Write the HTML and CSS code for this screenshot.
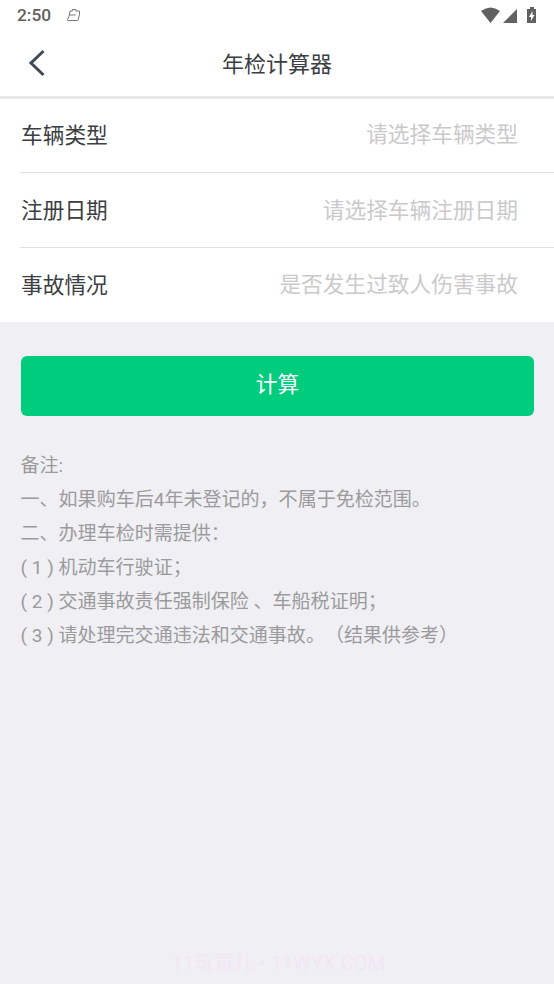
FILE: index.html
```html
<!DOCTYPE html>
<html lang="zh-CN">
<head>
<meta charset="utf-8">
<title>年检计算器</title>
<link rel="stylesheet" href="styles.css">
</head>
<body>
<div class="status">
  <span class="time">2:50</span>
  <svg class="bag" width="16" height="16" viewBox="0 0 16 16" fill="none" stroke="#777"><path d="M4 4h2.300V2.500h3.500V4H13.500v3l-1.300 5.500q-.3 1-1.200 1H1.800q-.9 0-.4-1Q3.500 10 3.500 7zM3.700 8h5.800"/></svg>
  <svg class="signals" width="60" height="18" viewBox="0 0 60 18" fill="#616161"><path d="M0 5Q9.500-2 19 5L9.500 17z"/><path d="M36 3v14H22z"/><path d="M46 3h3V1h4v2h2v14h-9z"/><path fill="#fff" d="M51.500 5L48 11h2v4l3.500-6h-2z"/></svg>
</div>
<header class="nav">
  <svg class="back" width="18" height="28" viewBox="0 0 18 28" fill="none" stroke="#414a57" stroke-width="3"><path d="M15.500 2L3 14l12.500 12"/></svg>
  <h1>年检计算器</h1>
</header>
<main>
  <section class="form">
    <div class="row"><span>车辆类型</span><span class="hint">请选择车辆类型</span></div>
    <div class="row"><span>注册日期</span><span class="hint">请选择车辆注册日期</span></div>
    <div class="row"><span>事故情况</span><span class="hint">是否发生过致人伤害事故</span></div>
  </section>
  <button class="submit">计算</button>
  <section class="notes">
    <p>备注:</p>
    <p>一、如果购车后4年未登记的，不属于免检范围。</p>
    <p>二、办理车检时需提供：</p>
    <p>( 1 ) 机动车行驶证；</p>
    <p>( 2 ) 交通事故责任强制保险 、车船税证明；</p>
    <p>( 3 ) 请处理完交通违法和交通事故。（结果供参考）</p>
  </section>
</main>
<footer class="watermark">11玩意儿 • 11WYX.COM</footer>
</body>
</html>
```

FILE: styles.css
```css
* { box-sizing: border-box; }
body { margin: 0; height: 984px; display: flex; flex-direction: column; background: #efeff4; font-family: Roboto, "Noto Sans CJK SC", sans-serif; color: #3b3e42; overflow: hidden; }
.status { height: 30px; background: #fff; display: flex; align-items: center; padding: 0 13px 0 17px; }
.time { font-size: 17.3px; font-weight: 500; color: #606060; }
.bag { margin-left: 15px; }
.signals { margin-left: auto; }
.nav { height: 69px; background: #fff; border-bottom: 3px solid #e8e8e8; display: grid; grid-template-columns: 60px 1fr 60px; align-items: center; }
.back { margin-left: 28px; }
h1 { margin: 0; padding-bottom: 2px; text-align: center; font-size: 22px; font-weight: 400; }
.form { background: #fff; padding-left: 20px; }
.row { height: 75px; display: flex; align-items: center; justify-content: space-between; padding: 0 36px 4px 1px; font-size: 21.7px; border-bottom: 1px solid #dedede; }
.row:first-child { height: 74px; }
.row:first-child .hint { margin-top: -2px; }
.row:nth-child(2) .hint { margin-top: 1px; }
.row:last-child { border: 0; height: 74px; }
.row:last-child .hint { margin-top: -1px; }
.hint { color: #cacaca; }
.submit { display: block; width: 513px; height: 60.5px; margin: 33.5px 0 0 21px; padding: 0 0 6px; border: 0; border-radius: 6px; background: #00cc7e; color: #fff; font: inherit; font-size: 21.7px; }
.notes { padding: 33px 20.500px; font-size: 19.05px; line-height: 33.9px; color: #9b9b9b; text-spacing-trim: space-all; }
p { margin: 0; white-space: pre; }
.watermark { margin-top: auto; padding: 0 0 7px 3px; text-align: center; font-size: 20px; line-height: 28px; color: #f3e6f5; }
```
